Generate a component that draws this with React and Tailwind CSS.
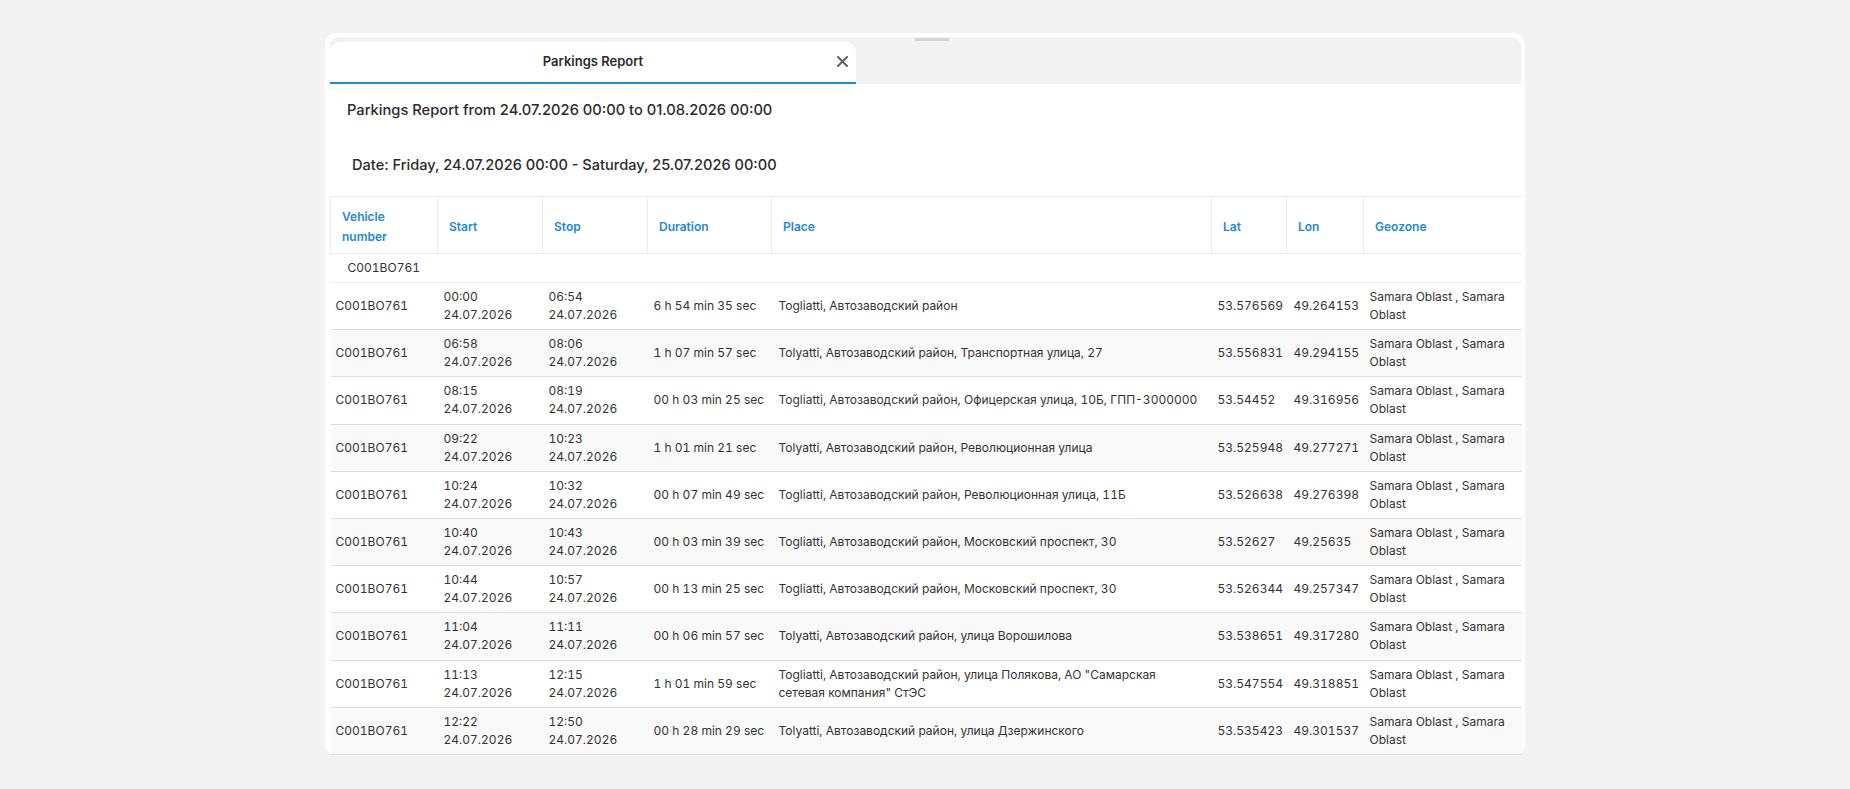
import React from "react";

const rows = [
  ["00:00", "06:54", "6 h 54 min 35 sec", "Togliatti, Автозаводский район", "53.576569", "49.264153"],
  ["06:58", "08:06", "1 h 07 min 57 sec", "Tolyatti, Автозаводский район, Транспортная улица, 27", "53.556831", "49.294155"],
  ["08:15", "08:19", "00 h 03 min 25 sec", "Togliatti, Автозаводский район, Офицерская улица, 10Б, ГПП-3000000", "53.54452", "49.316956"],
  ["09:22", "10:23", "1 h 01 min 21 sec", "Tolyatti, Автозаводский район, Революционная улица", "53.525948", "49.277271"],
  ["10:24", "10:32", "00 h 07 min 49 sec", "Togliatti, Автозаводский район, Революционная улица, 11Б", "53.526638", "49.276398"],
  ["10:40", "10:43", "00 h 03 min 39 sec", "Togliatti, Автозаводский район, Московский проспект, 30", "53.52627", "49.25635"],
  ["10:44", "10:57", "00 h 13 min 25 sec", "Togliatti, Автозаводский район, Московский проспект, 30", "53.526344", "49.257347"],
  ["11:04", "11:11", "00 h 06 min 57 sec", "Tolyatti, Автозаводский район, улица Ворошилова", "53.538651", "49.317280"],
  ["11:13", "12:15", "1 h 01 min 59 sec", "Togliatti, Автозаводский район, улица Полякова, АО \"Самарская сетевая компания\" СтЭС", "53.547554", "49.318851"],
  ["12:22", "12:50", "00 h 28 min 29 sec", "Tolyatti, Автозаводский район, улица Дзержинского", "53.535423", "49.301537"],
];

const headers = ["Vehicle number", "Start", "Stop", "Duration", "Place", "Lat", "Lon", "Geozone"];
const widths = ["w-[107px]", "w-[105px]", "w-[105px]", "w-[124px]", "w-[440px]", "w-[75px]", "w-[77px]", "w-[158px]"];

export default function App() {
  return (
    <div className="min-h-screen bg-[#f3f3f3] flex items-start justify-center pt-[33px] font-['Inter','Noto_Sans',sans-serif]">
      <div className="relative w-[1200px] bg-white rounded-[12px] pl-[5px] pr-[4px] pt-[4px] pb-[1px]">
        <div className="absolute top-[5px] left-[590px] w-[34px] h-[3px] rounded-full bg-[#d3d3d8]" />
        <div className="h-[47px] bg-[#f2f2f2] rounded-t-[9px] flex items-end">
          <div className="relative w-[526px] h-[42px] bg-white rounded-t-[10px] border-b-2 border-[#1e88d3] flex items-center justify-center">
            <span className="text-[13px] font-semibold text-[#2b2b2b]">Parkings Report</span>
            <svg className="absolute right-[8px] top-[14px]" width="11" height="11" viewBox="0 0 11 11">
              <path d="M1 1L10 10M10 1L1 10" stroke="#5b5f66" strokeWidth="2" strokeLinecap="round" />
            </svg>
          </div>
        </div>
        <div className="pt-[16px] pl-[17px] text-[14.7px] leading-[20px] font-medium text-[#2b2b2b]">
          Parkings Report from 24.07.2026 00:00 to 01.08.2026 00:00
        </div>
        <div className="pt-[35px] pl-[22px] text-[14.6px] leading-[20px] font-medium text-[#2b2b2b]">
          Date: Friday, 24.07.2026 00:00 - Saturday, 25.07.2026 00:00
        </div>
        <table className="mt-[21px] w-[1191px] table-fixed border-collapse text-[12px] leading-[18px] text-[#333333] tabular-nums">
          <colgroup>
            {widths.map((w, i) => (
              <col key={i} className={w} />
            ))}
          </colgroup>
          <thead>
            <tr className="h-[57px]">
              {headers.map((h, i) => (
                <th
                  key={h}
                  className={
                    "border-t border-b border-[#ebebeb] text-left align-middle pl-[11px] pr-[6px] pt-[3px] text-[12px] leading-[20px] font-semibold text-[#1e88d3] " +
                    (i === 0 ? "border-l " : "") +
                    (i === headers.length - 1 ? "" : "border-r ")
                  }
                >
                  {h === "Vehicle number" ? (
                    <>
                      Vehicle
                      <br />
                      number
                    </>
                  ) : (
                    h
                  )}
                </th>
              ))}
            </tr>
          </thead>
          <tbody>
            <tr className="h-[29px] border-b border-[#ececec]">
              <td colSpan={8} className="pl-[17px] align-middle">
                C001BO761
              </td>
            </tr>
            {rows.map((r, i) => (
              <tr
                key={i}
                className={"h-[47.2px] border-b border-[#dedede] " + (i % 2 === 1 ? "bg-[#f9f9f9]" : "bg-white")}
              >
                <td className="pl-[5px] align-middle whitespace-nowrap">C001BO761</td>
                <td className="pl-[6px] align-middle">
                  {r[0]}
                  <br />
                  24.07.2026
                </td>
                <td className="pl-[6px] align-middle">
                  {r[1]}
                  <br />
                  24.07.2026
                </td>
                <td className="pl-[6px] align-middle whitespace-nowrap">{r[2]}</td>
                <td className="pl-[7px] pr-[8px] align-middle">{r[3]}</td>
                <td className="pl-[6px] align-middle whitespace-nowrap">{r[4]}</td>
                <td className="pl-[7px] align-middle whitespace-nowrap">{r[5]}</td>
                <td className="pl-[6px] pr-[6px] align-middle">Samara Oblast , Samara Oblast</td>
              </tr>
            ))}
          </tbody>
        </table>
      </div>
    </div>
  );
}
